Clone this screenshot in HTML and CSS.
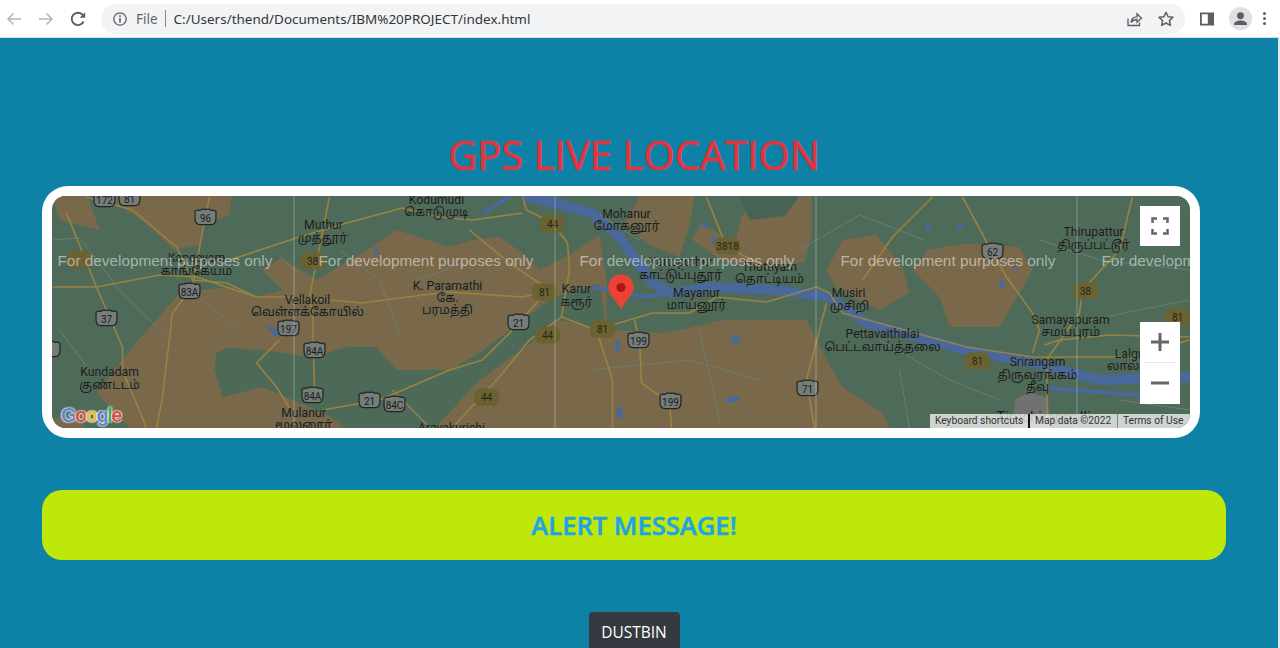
FILE: index.html
```html
<!DOCTYPE html>
<html lang="en">
<head>
<meta charset="utf-8">
<title>GPS Live Location</title>
<link rel="stylesheet" href="styles.css">
</head>
<body>
<header class="chrome">
  <div class="nav">
    <svg class="ic" viewBox="0 0 20 20"><path class="st-faint" d="M17 10H4M9.5 4.5 4 10l5.5 5.5"/></svg>
    <svg class="ic" viewBox="0 0 20 20"><path class="st-faint" d="M3 10h13M10.5 4.5 16 10l-5.500 5.500"/></svg>
    <svg class="ic" viewBox="0 0 20 20"><path class="st-dark" d="M15.600 12.500A6.200 6.200 0 1 1 14.500 5.700L16.500 7.700"/><path class="fi-dark" d="M17.200 3.200v5.600h-5.600z"/></svg>
  </div>
  <div class="omni">
    <svg class="info" viewBox="0 0 16 16"><circle class="st-thin" cx="8" cy="8" r="6.200"/><path class="fi-dark" d="M7.200 7h1.600v4.500H7.200zM7.200 4.300h1.600v1.600H7.200z"/></svg>
    <span class="file">File</span>
    <span class="sep"></span>
    <span class="url">C:/Users/thend/Documents/IBM%20PROJECT/index.html</span>
    <span class="omni-end">
      <svg class="ic-s" viewBox="0 0 18 18"><path class="st-thin" d="M3 8.500V15.500H14.500V12.500"/><path class="st-thin" d="M6 12.500C6.500 8.500 9 6.800 12 6.800V3.800L16.500 8.200 12 12.300V9.500C9.500 9.500 7.500 10.300 6 12.500Z"/></svg>
      <svg class="ic-s" viewBox="0 0 18 18"><path class="st-star" d="M9 2.200l2.100 4.500 4.900.6-3.600 3.300.95 4.800L9 13l-4.350 2.400.95-4.800L2 7.300l4.900-.6z"/></svg>
    </span>
  </div>
  <div class="tools">
    <svg class="ic-side" viewBox="0 0 16 16"><path class="fi-dark" d="M1 1.500h14v13H1zM2.800 3.200v9.600h6V3.200z"/></svg>
    <span class="avatar"><svg viewBox="0 0 22 22"><circle class="fi-dark" cx="11" cy="8.300" r="3.300"/><path class="fi-dark" d="M4.800 16.500c0-2.600 3.600-3.700 6.200-3.700s6.200 1.100 6.200 3.700v.7H4.800z"/></svg></span>
    <span class="kebab"><i></i><i></i><i></i></span>
  </div>
</header>

<main class="page">
  <h1 class="title">GPS LIVE LOCATION</h1>
  <div class="map-frame">
    <div class="map">
      <svg class="map-svg" viewBox="53 196 1137 232" xmlns="http://www.w3.org/2000/svg">
        <defs>
          <filter id="soft"><feGaussianBlur stdDeviation="0.700"/></filter>
          <path id="shield" d="M-11 -7q2.500 -2 5 -1q2.500 -2 6 -1q3.500 -1 6 1q2.500 -1 5 1v8q-.500 6 -5 6h-12q-4.500 0 -5 -6z"/>
          <path id="hex" d="M-9 -9h18l4 4v10l-4 4h-18l-4 -4v-10z"/>
        </defs>
        <rect class="m-green" x="53" y="196" width="1137" height="232"/>
        <g filter="url(#soft)">
          <path class="m-brown" d="M53 196H88L100 230L60 220Z"/>
          <path class="m-brown" d="M105 196H232L230 215L205 225L200 245L175 250L145 222Z"/>
          <path class="m-brown" d="M130 428L97 393L133 347L180 293L230 287L257 297L283 290L263 270L282 258L317 280L363 253L397 230L450 247L473 240L500 237L523 253L540 270L570 255L600 235L607 280L607 330L667 333L723 320L807 320L827 360L843 387L883 413L890 428Z"/>
          <path class="m-brown" d="M640 196H695L690 225L680 257L650 245L625 225Z"/>
          <path class="m-brown" d="M693 240L702 222L735 245L742 216L760 196H812L812 235L805 262L770 268L725 262Z"/>
          <path class="m-brown" d="M827 270L843 240L877 235L903 267L910 293L880 310L837 290Z"/>
          <path class="m-brown" d="M928 250L967 243L1020 247L1033 270L1020 293L1000 327L950 327L940 297L913 270Z"/>
          <path class="m-brown" d="M53 420L75 412L85 428H53Z"/>
          <path class="m-green" d="M217 353L227 348L263 350L313 357L347 347L377 347L397 370L450 370L480 353L523 320L553 297L600 284L607 330L560 320L540 337L480 380L440 423L436 428H345L330 416L293 400L263 387L223 397L215 370Z"/>
          <path class="m-dark" d="M740 196H800L785 216L750 220Z"/>
          <path class="m-city" d="M1016 399L1030 392L1048 398L1052 428H1012Z"/>
          <path class="m-river" d="M527 196L593 213L620 237L653 283L673 293L713 287L777 290L830 297L867 323L967 350L1033 363L1100 380L1190 377"/>
          <path class="m-river2" d="M483 213L510 197M593 287L647 297L673 293M1048 388L1100 392L1150 396M640 342L637 350M618 340L618 352"/>
          <path class="m-lake" d="M711 235l9 6 3 6-10-2zM700 225l6-4 3 8zM1000 279l7 6-7 4zM375 245l6 10-7-2zM265 325l17 6-6 6zM732 335l8 0 0 8-8 0zM617 408l6 0 0 10-6 0zM726 398l14-2 0 5-14 2zM1013 264l6 4-5 2zM590 222l7-2 0 6zM958 223l9 3-9 3zM926 222l8 6-8 3z"/>
          <g class="r-minor">
            <path d="M53 240L80 238L120 290L140 310L170 340M280 255L300 275M170 270L190 290L240 330M400 335L380 280L340 250M470 260L420 280M600 215L640 240L660 215M590 370L690 360L760 380M800 250L860 215L925 240M880 340L950 380L1000 400M1040 240L1100 260L1190 270M900 370L910 428M1090 320L1190 300M60 330L90 370M700 330L720 420M1120 400L1190 410"/>
          </g>
          <g class="r-main">
            <path d="M523 197L527 210L553 223L568 243L570 270L562 317L530 340L500 377L460 420L453 428"/>
            <path d="M53 287L97 287L160 275L197 277L257 297L283 297L330 300L363 303L407 297L450 292L523 297L547 292"/>
            <path d="M562 317L597 330L613 380L613 428"/>
            <path d="M603 328L653 313L690 313L717 297L767 302L817 287L830 293L843 313L967 347L1033 357L1133 357L1190 340"/>
            <path d="M635 320L640 340L642 383L670 403L672 428"/>
            <path d="M827 303L807 380L815 428"/>
            <path d="M1133 197L1120 250L1083 290L1080 313L1047 360L1048 428"/>
            <path d="M963 197L993 253L1007 277L1033 313L1040 330L1033 353"/>
            <path d="M933 197L893 237L863 280"/>
            <path d="M1045 345L1060 340L1110 335L1190 337"/>
            <path d="M707 197L727 247L773 270"/>
            <path d="M87 197L133 210L177 247L193 280L227 283L257 297"/>
            <path d="M210 197L200 247L193 287L173 313L163 397L157 428"/>
            <path d="M67 213L97 287L123 347L123 370L147 428"/>
            <path d="M230 260L297 238L347 223L403 208L440 217L473 220L523 213"/>
            <path d="M330 197L320 247L310 297L313 313L315 393"/>
            <path d="M280 340L257 363L277 387L293 413"/>
            <path d="M323 410L380 400L450 370L483 360L513 330L537 303L547 293"/>
            <path d="M393 390L430 427"/>
            <path d="M470 230L510 263L550 290"/>
          </g>
        </g>

        <g class="shields">
          <g transform="translate(105 200)"><use href="#shield"/><text>172</text></g>
          <g transform="translate(130 199)"><use href="#shield"/><text>81</text></g>
          <g transform="translate(206 218)"><use href="#shield"/><text>96</text></g>
          <g transform="translate(190 292)"><use href="#shield"/><text>83A</text></g>
          <g transform="translate(107 319)"><use href="#shield"/><text>37</text></g>
          <g transform="translate(289 329)"><use href="#shield"/><text>197</text></g>
          <g transform="translate(315 351)"><use href="#shield"/><text>84A</text></g>
          <g transform="translate(313 396)"><use href="#shield"/><text>84A</text></g>
          <g transform="translate(370 401)"><use href="#shield"/><text>21</text></g>
          <g transform="translate(395 405)"><use href="#shield"/><text>84C</text></g>
          <g transform="translate(519 323)"><use href="#shield"/><text>21</text></g>
          <g transform="translate(639 341)"><use href="#shield"/><text>199</text></g>
          <g transform="translate(671 402)"><use href="#shield"/><text>199</text></g>
          <g transform="translate(808 389)"><use href="#shield"/><text>71</text></g>
          <g transform="translate(993 252)"><use href="#shield"/><text>62</text></g>
          <g transform="translate(50 350)"><use href="#shield"/></g>
        </g>
        <g class="hexes">
          <g transform="translate(80 260)"><use href="#hex"/></g>
          <g transform="translate(313 261)"><use href="#hex"/><text>38</text></g>
          <g transform="translate(553 224)"><use href="#hex"/><text>44</text></g>
          <g transform="translate(545 292)"><use href="#hex"/><text>81</text></g>
          <g transform="translate(548 335)"><use href="#hex"/><text>44</text></g>
          <g transform="translate(603 329)"><use href="#hex"/><text>81</text></g>
          <g transform="translate(487 397)"><use href="#hex"/><text>44</text></g>
          <g transform="translate(728 246)"><use href="#hex"/><text>3818</text></g>
          <g transform="translate(1086 291)"><use href="#hex"/><text>38</text></g>
          <g transform="translate(978 361)"><use href="#hex"/><text>81</text></g>
          <g transform="translate(1178 317)"><use href="#hex"/><text>81</text></g>
        </g>

        <g class="labels">
          <text x="437" y="204">Kodumudi</text><text x="437" y="216">கொடுமுடி</text>
          <text x="324" y="229">Muthur</text><text x="323" y="242">முத்தூர்</text>
          <text x="197" y="262">Kangeyam</text><text x="197" y="275">காங்கேயம்</text>
          <text x="308" y="304">Vellakoil</text><text x="308" y="316">வெள்ளக்கோயில்</text>
          <text x="448" y="290">K. Paramathi</text><text x="448" y="302">கே.</text><text x="448" y="314">பரமத்தி</text>
          <text x="110" y="376">Kundadam</text><text x="110" y="389">குண்டடம்</text>
          <text x="304" y="417">Mulanur</text><text x="304" y="429">மூலனூர்</text>
          <text x="452" y="432">Aravakurichi</text>
          <text x="627" y="218">Mohanur</text><text x="627" y="230">மோகனூர்</text>
          <text x="577" y="293">Karur</text><text x="577" y="306">கரூர்</text>
          <text x="681" y="266">Kattuputhur</text><text x="681" y="279">காட்டுப்புதூர்</text>
          <text x="770" y="271">Thottiyam</text><text x="770" y="283">தொட்டியம்</text>
          <text x="697" y="297">Mayanur</text><text x="697" y="309">மாயனூர்</text>
          <text x="849" y="297">Musiri</text><text x="850" y="310">முசிறி</text>
          <text x="883" y="338">Pettavaithalai</text><text x="883" y="351">பெட்டவாய்த்தலை</text>
          <text x="1094" y="236">Thirupattur</text><text x="1094" y="249">திருப்பட்டூர்</text>
          <text x="1071" y="324">Samayapuram</text><text x="1071" y="336">சமயபுரம்</text>
          <text x="1038" y="366">Srirangam</text><text x="1038" y="379">திருவரங்கம்</text><text x="1038" y="391">தீவு</text>
          <text x="1135" y="358">Lalgudi</text><text x="1135" y="370">லால்குடி</text>
          <text class="big" x="1044" y="422">Tiruchirappalli</text>
        </g>

        <g class="grid">
          <path d="M294.500 196V428M555.500 196V428M816.500 196V428M1077.500 196V428"/>
        </g>
        <g class="watermark">
          <text x="58" y="266">For development purposes only</text>
          <text x="319" y="266">For development purposes only</text>
          <text x="580" y="266">For development purposes only</text>
          <text x="841" y="266">For development purposes only</text>
          <text x="1102" y="266">For development purposes only</text>
        </g>
        <g>
          <path class="pin" d="M621.500 274.500c-7 0-12.800 5.500-12.800 12.500 0 9 9 13 12.800 23 3.800-10 12.800-14 12.800-23 0-7-5.800-12.500-12.800-12.500z"/>
          <circle class="pin-dot" cx="621.500" cy="287.500" r="4.500"/>
        </g>
      </svg>

      <div class="g-logo"><span class="gb">G</span><span class="gr">o</span><span class="gy">o</span><span class="gb">g</span><span class="gg">l</span><span class="gr">e</span></div>

      <button class="ctl fullscreen" type="button" aria-label="Fullscreen">
        <svg viewBox="0 0 18 18"><path class="st-ctl" d="M1.500 6V1.500H6M12 1.500h4.500V6M16.500 12v4.500H12M6 16.500H1.500V12"/></svg>
      </button>
      <div class="ctl zoom">
        <span class="z-btn"><svg viewBox="0 0 18 18"><path class="fi-ctl" d="M7.500 0h3v7.500H18v3h-7.500V18h-3v-7.500H0v-3h7.500z"/></svg></span>
        <span class="z-div"></span>
        <span class="z-btn"><svg viewBox="0 0 18 18"><path class="fi-ctl" d="M0 7.500h18v3H0z"/></svg></span>
      </div>
      <div class="attrib">
        <span class="a-keys">Keyboard shortcuts</span>
        <span class="a-item">Map data ©2022</span>
        <span class="a-item a-last">Terms of Use</span>
      </div>
    </div>
  </div>

  <div class="alert">ALERT MESSAGE!</div>
  <div class="actions"><button class="dustbin" type="button">DUSTBIN</button></div>
</main>
<div class="scroll-edge"></div>
</body>
</html>
```
FILE: styles.css
```css
* { box-sizing: border-box; }
html, body { margin: 0; height: 648px; overflow: hidden; }
body { background: #0d82a6; font-family: "Open Sans", "Noto Sans", sans-serif; }

/* browser chrome */
.chrome { height: 38px; background: #fff; display: flex; align-items: center; border-bottom: 1px solid #d9e2e6; }
.nav { width: 101px; flex: none; display: flex; gap: 12px; padding-left: 4px; align-items: center; }
.ic { width: 20px; height: 20px; }
.st-faint { fill: none; stroke: #b4b7bb; stroke-width: 1.600; }
.st-dark { fill: none; stroke: #5b5e62; stroke-width: 1.900; }
.fi-dark { fill: #5b5e62; }
.st-thin { fill: none; stroke: #5b5e62; stroke-width: 1.300; }
.st-star { fill: none; stroke: #5b5e62; stroke-width: 1.500; stroke-linejoin: round; }
.omni { width: 1084px; height: 30px; flex: none; border-radius: 15px; background: #f1f3f4; display: flex; align-items: center; padding: 0 10px 0 11px; }
.info { width: 16px; height: 16px; flex: none; }
.file { margin-left: 8px; font-size: 13.500px; color: #63676b; font-family: "Noto Sans", sans-serif; }
.sep { width: 1px; height: 17px; background: #82868a; margin: 0 8px 0 7px; }
.url { font-size: 13.480px; color: #33363a; font-family: "Noto Sans", sans-serif; }
.omni-end { margin-left: auto; display: flex; gap: 14px; align-items: center; }
.ic-s { width: 18px; height: 18px; }
.tools { flex: 1; display: flex; align-items: center; padding-left: 14px; }
.ic-side { width: 16px; height: 16px; }
.avatar { width: 23px; height: 23px; border-radius: 50%; background: #dfe1e5; margin-left: 14px; display: flex; }
.avatar svg { width: 23px; height: 23px; }
.kebab { margin-left: 11px; display: flex; flex-direction: column; gap: 2px; }
.kebab i { width: 3px; height: 3px; border-radius: 50%; background: #5b5e62; display: block; }

/* page */
.page { padding: 0 54px 0 42px; }
.title { margin: 92px 0 7px; height: 49px; text-align: center; font-size: 40px; line-height: 49px; font-weight: 400; color: #e2343f; -webkit-text-stroke: 0.700px #e2343f; letter-spacing: 0.050px; }
.map-frame { width: 1158px; height: 252px; padding: 10px; background: #fff; border-radius: 26px; }
.map { position: relative; width: 1138px; height: 232px; overflow: hidden; border-radius: 14px; background: #4f6b5a; }
.map-svg { display: block; width: 1138px; height: 232px; }
.m-green { fill: #4e6a58; }
.m-brown { fill: #7a684c; }
.m-dark { fill: #466352; }
.m-city { fill: #6f7171; }
.m-river { fill: none; stroke: #48679b; stroke-width: 10; stroke-linejoin: round; stroke-linecap: round; }
.m-river2 { fill: none; stroke: #48679b; stroke-width: 4; stroke-linejoin: round; }
.m-lake { fill: #48679b; }
.r-minor path { fill: none; stroke: #6a7e70; stroke-width: 1; }
.r-main path { fill: none; stroke: #9a8340; stroke-width: 1.600; stroke-linejoin: round; }
.shields use { fill: #767c79; stroke: #242626; stroke-width: 1.300; transform: scale(.95); }
.shields text { font: 10px Roboto, sans-serif; fill: #1a1c1c; text-anchor: middle; dominant-baseline: central; }
.hexes use { fill: #6a6230; transform: scale(.95); }
.hexes text { font: 10px Roboto, sans-serif; fill: #26261a; text-anchor: middle; dominant-baseline: central; }
.labels text { font: 12.200px Roboto, "Noto Sans Tamil", "Noto Sans", sans-serif; fill: #1b1d1c; text-anchor: middle; paint-order: stroke; stroke: rgba(95, 110, 95, .35); stroke-width: 1.500px; }
.labels .big { font-size: 15px; }
.grid path { stroke: rgba(255, 255, 255, .3); stroke-width: 1; fill: none; }
.watermark text { font: 15.350px "Liberation Sans", Arial, sans-serif; fill: rgba(255, 255, 255, .5); }
.pin { fill: #ea4335; }
.pin-dot { fill: #b31412; }

.g-logo { position: absolute; left: 9px; bottom: 1px; font: 700 20px/24px "Liberation Sans", sans-serif; letter-spacing: -1.500px; text-shadow: 0 0 1px #fff, 0 0 2px #fff, 0 0 2px #fff; }
.gb { color: #5a86d6; }
.gr { color: #d8503f; }
.gy { color: #e5b92f; }
.gg { color: #45a557; }

.ctl { position: absolute; right: 10px; background: #fff; border: 0; padding: 0; display: flex; align-items: center; justify-content: center; }
.fullscreen { top: 10px; width: 40px; height: 40px; }
.fullscreen svg { width: 18px; height: 18px; }
.st-ctl { fill: none; stroke: #666; stroke-width: 2.500; }
.fi-ctl { fill: #666; }
.zoom { top: 126px; width: 40px; height: 82px; flex-direction: column; justify-content: flex-start; }
.z-btn { width: 40px; height: 40px; display: flex; align-items: center; justify-content: center; }
.z-btn svg { width: 18px; height: 18px; }
.z-div { width: 30px; height: 1px; background: #e6e6e6; flex: none; }
.attrib { position: absolute; right: 0; bottom: 0; height: 14px; width: 260px; display: flex; align-items: center; background: rgba(255, 255, 255, .72); font: 10.200px/14px Roboto, sans-serif; color: #333; }
.a-keys { padding-left: 5px; width: 100px; border-right: 2px solid #111; flex: none; height: 14px; }
.a-item { padding-left: 5px; width: 88px; border-right: 1px solid #888; flex: none; height: 14px; }
.a-last { border: 0; width: auto; }

/* alert and action */
.alert { margin-top: 52px; height: 70px; border-radius: 20px; background: #bde809; display: flex; align-items: center; justify-content: center; font-size: 25.600px; font-weight: 600; color: #1fa3e3; -webkit-text-stroke: 0.500px #1fa3e3; }
.actions { margin-top: 52px; display: flex; justify-content: center; }
.dustbin { width: 91px; height: 48px; padding: 0 0 9px; border: 0; border-radius: 4px; background: #343a40; color: #fff; font: 400 15.500px "Open Sans", sans-serif; }

/* window scrollbar sliver at the right edge */
.scroll-edge { position: fixed; top: 38px; right: 0; width: 2px; height: 610px; background: #dfe9ec; }
```
